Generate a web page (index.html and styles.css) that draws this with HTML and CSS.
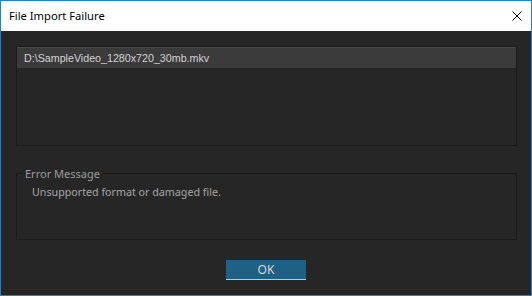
FILE: index.html
```html
<!DOCTYPE html>
<html lang="en">
<head>
    <meta charset="UTF-8">
    <title>File Import Failure</title>
    <link rel="stylesheet" href="styles.css">
</head>
<body>
    <div class="window">
        <div class="titlebar">
            <span class="title">File Import Failure</span>
            <button class="close" aria-label="Close">
                <svg width="10" height="10" viewBox="0 0 10 10">
                    <path d="M0.5 0.5 L9.5 9.5 M9.5 0.5 L0.5 9.5" stroke="#000" stroke-width="1" fill="none"/>
                </svg>
            </button>
        </div>

        <div class="content">
            <div class="file-list">
                <div class="file-row selected">D:\SampleVideo_1280x720_30mb.mkv</div>
            </div>

            <fieldset class="error-box">
                <legend>Error Message</legend>
                <p class="error-text">Unsupported format or damaged file.</p>
            </fieldset>

            <div class="actions">
                <button class="ok-btn">OK</button>
            </div>
        </div>
    </div>
</body>
</html>
```

FILE: styles.css
```css
body {
    margin: 0;
    background-color: #262626;
}
.window {
    width: 532px;
    height: 296px;
    box-sizing: border-box;
    border: 1px solid #1883d7;
    background-color: #262626;
    display: flex;
    flex-direction: column;
}
.titlebar {
    height: 30px;
    background-color: #fff;
    display: flex;
    align-items: center;
    justify-content: space-between;
    padding: 0 9px 0 8px;
}
.title {
    font-family: "Noto Sans", sans-serif;
    font-size: 11.2px;
    color: #000;
    padding-bottom: 1px;
}
.close {
    background: none;
    border: none;
    padding: 0;
    width: 10px;
    height: 10px;
    display: flex;
}
.content {
    padding: 15px 14px 0 15px;
    display: flex;
    flex-direction: column;
}
.file-list {
    height: 100px;
    box-sizing: border-box;
    border: 1px solid #1b1b1b;
    background-color: #262626;
}
.file-row {
    height: 21px;
    box-sizing: border-box;
    padding-left: 7px;
    font-family: "Liberation Sans", Arial, sans-serif;
    font-size: 10.7px;
    line-height: 20px;
    color: #d2d2d2;
}
.file-row.selected {
    background-color: #3b3b3b;
    border-top: 1px solid #4a4a4a;
}
.error-box {
    margin: 20px 0 0 0;
    padding: 0;
    height: 74px;
    box-sizing: border-box;
    border: 1px solid #1b1b1b;
    min-width: 0;
}
.error-box legend {
    margin-left: 6px;
    padding: 0 3px 0 2px;
    font-family: "Noto Sans", sans-serif;
    font-size: 11px;
    color: #9c9c9c;
}
.error-text {
    margin: 4px 0 0 0;
    padding-left: 15px;
    font-family: "Noto Sans", sans-serif;
    font-size: 10.7px;
    color: #a6a6a6;
}
.actions {
    display: flex;
    justify-content: center;
    margin-top: 20px;
    padding-right: 1px;
}
.ok-btn {
    width: 80px;
    height: 20px;
    box-sizing: border-box;
    border: none;
    border-bottom: 1px solid #c8c8c8;
    background-color: #1f6184;
    color: #d8d8d8;
    font-family: "Noto Sans", sans-serif;
    font-size: 12px;
    padding: 0;
    cursor: pointer;
}
```
